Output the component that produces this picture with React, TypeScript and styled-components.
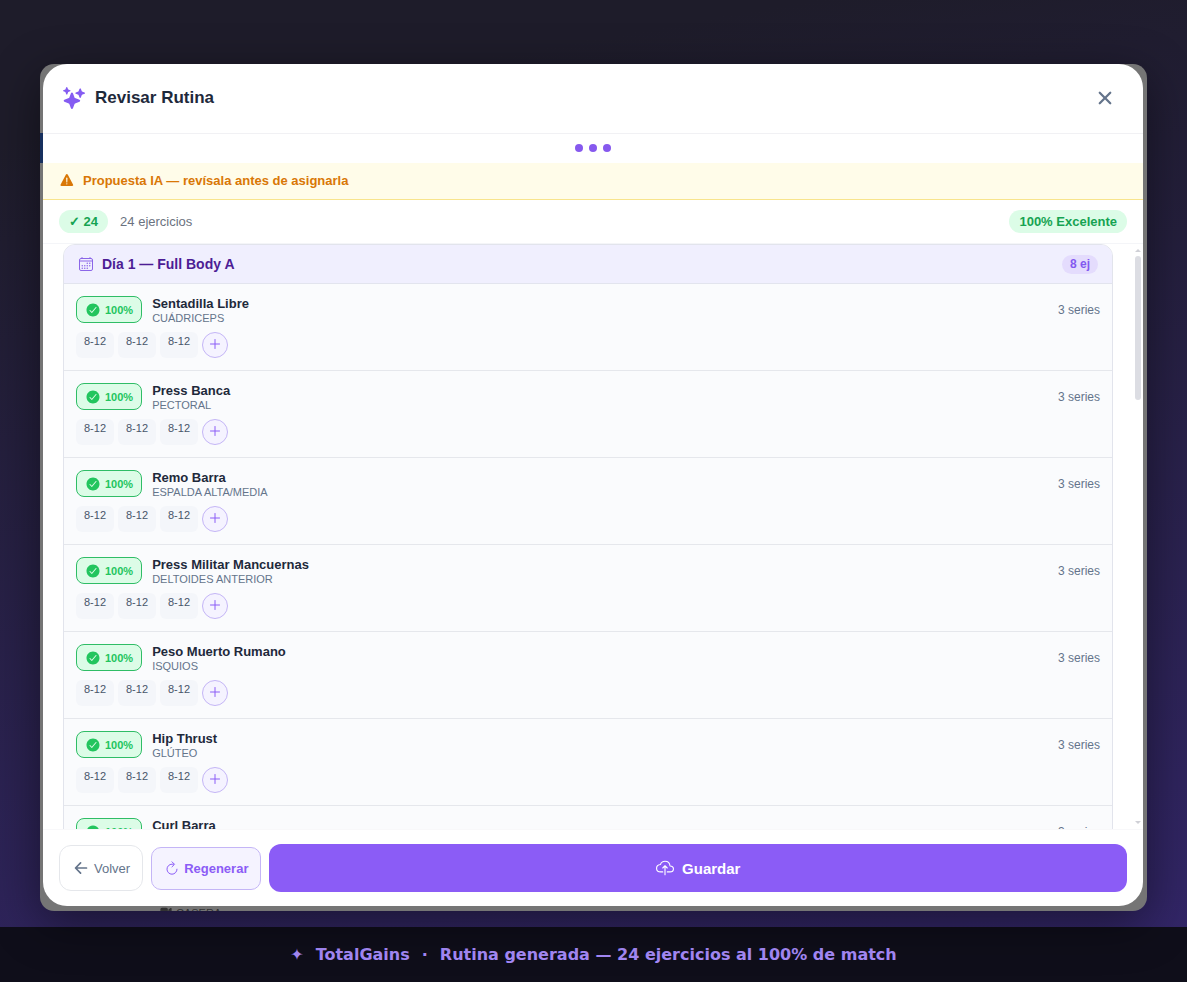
import React from 'react';
import styled, { createGlobalStyle } from 'styled-components';
import {
  IoAddOutline,
  IoArrowBack,
  IoCalendarOutline,
  IoCheckmarkCircle,
  IoClose,
  IoCloudUploadOutline,
  IoRefreshOutline,
  IoSparkles,
  IoVideocam,
  IoWarning,
} from 'react-icons/io5';

const GlobalStyle = createGlobalStyle`
  *, *::before, *::after { box-sizing: border-box; }
  body {
    margin: 0;
    font-family: "Liberation Sans", Arial, sans-serif;
    color: #1e293b;
  }
  button { font-family: inherit; cursor: pointer; }
  svg { display: block; flex: none; }
`;

const Page = styled.div`
  display: flex;
  flex-direction: column;
  height: 100vh;
  min-height: 480px;
  background: linear-gradient(170deg, #1e1c2a 0%, #1e1c2a 12%, #33266a 100%);
`;

const Stage = styled.main`
  flex: 1;
  min-height: 0;
  display: flex;
  padding: 64px 40px 16px;
`;

const Window = styled.div`
  position: relative;
  flex: 1;
  min-width: 0;
  display: flex;
  padding: 0 4px 5px 3px;
  border-radius: 14px;
  overflow: hidden;
  background: #757575;
  box-shadow: 0 12px 48px rgba(0, 0, 0, 0.45);
`;

const Underlay = styled.div`
  position: absolute;
  inset: 0;
  display: flex;
  flex-direction: column;
  justify-content: space-between;
  padding-top: 69px;
`;

const UnderlayBar = styled.div`
  width: 50%;
  height: 30px;
  background: #17305e;
`;

const UnderlayLabel = styled.div`
  display: flex;
  gap: 4px;
  height: 6px;
  padding-left: 120px;
  font-size: 11px;
  line-height: 16px;
  color: #333;
`;

const Modal = styled.section`
  position: relative;
  flex: 1;
  min-width: 0;
  display: flex;
  flex-direction: column;
  border-radius: 24px;
  overflow: hidden;
  background: #fff;
`;

const Header = styled.header`
  display: flex;
  align-items: center;
  justify-content: space-between;
  height: 70px;
  padding: 0 26px 2px 20px;
  border-bottom: 1px solid #f1f1f4;
`;

const Title = styled.h1`
  display: flex;
  align-items: center;
  gap: 10px;
  margin: 0;
  font-size: 17px;
  line-height: 24px;
  svg { color: #855cf2; }
`;

const CloseButton = styled.button`
  display: flex;
  padding: 0;
  border: 0;
  background: none;
  color: #64748b;
`;

const Steps = styled.div`
  display: flex;
  align-items: center;
  justify-content: center;
  gap: 6px;
  height: 29px;
  padding-bottom: 2px;
`;

const Dot = styled.span`
  width: 8px;
  height: 8px;
  border-radius: 50%;
  background: #8659ee;
`;

const Notice = styled.div`
  display: flex;
  align-items: center;
  gap: 8px;
  height: 37px;
  padding: 0 16px 2px;
  border-bottom: 1px solid #f8e48c;
  background: #fffce9;
  color: #d97706;
  font-size: 13px;
  font-weight: 700;
`;

const Summary = styled.div`
  display: flex;
  align-items: center;
  gap: 12px;
  height: 44px;
  padding: 0 16px;
  border-bottom: 1px solid #f4f5f8;
  font-size: 13px;
  color: #6b7280;
`;

const Pill = styled.span<{ $end?: boolean }>`
  padding: 4px 10px;
  margin-left: ${(p) => (p.$end ? 'auto' : '0')};
  border-radius: 12px;
  background: #dcfce7;
  color: #16a352;
  font-weight: 700;
  line-height: 15px;
`;

const Body = styled.div`
  flex: 1;
  min-height: 0;
  display: flex;
`;

const Scroller = styled.div`
  flex: 1;
  min-width: 0;
  padding: 0 19px 0 20px;
  overflow-y: auto;
  scrollbar-width: none;
`;

const Track = styled.div`
  display: flex;
  flex-direction: column;
  align-items: center;
  width: 11px;
  padding: 4px 0;
`;

const Thumb = styled.div`
  width: 6px;
  height: 25%;
  margin: 4px 0 auto;
  border-radius: 3px;
  background: #dcdde3;
`;

const Day = styled.section`
  border: 1px solid #e2e4ec;
  border-radius: 12px;
  overflow: hidden;
  background: #fafbfd;
`;

const DayHeader = styled.header`
  display: flex;
  align-items: center;
  gap: 8px;
  height: 39px;
  padding: 0 14px;
  border-bottom: 1px solid #e2e4ee;
  background: #f0effe;
  svg { color: #8b66e8; }
`;

const DayTitle = styled.h2`
  flex: 1;
  margin: 0;
  font-size: 14px;
  line-height: 20px;
  color: #4c1d95;
`;

const Count = styled.span`
  padding: 2px 8px;
  border-radius: 10px;
  background: #e4dcfd;
  color: #8359f0;
  font-size: 12px;
  font-weight: 700;
  line-height: 15px;
`;

const Exercise = styled.article`
  height: 87px;
  padding: 12px;
  border-bottom: 1px solid #e5e7ec;
`;

const ExerciseTop = styled.div`
  display: flex;
  align-items: center;
  gap: 10px;
  height: 27px;
`;

const Match = styled.span`
  display: flex;
  align-items: center;
  gap: 4px;
  height: 27px;
  padding: 0 8px;
  border: 1px solid #2fbd66;
  border-radius: 8px;
  background: #dcfce7;
  color: #22c55e;
  font-size: 11px;
  font-weight: 700;
`;

const Info = styled.div`
  flex: 1;
  min-width: 0;
  padding-top: 2px;
`;

const Name = styled.h3`
  margin: 0;
  font-size: 13px;
  line-height: 15px;
`;

const Muscle = styled.p`
  margin: 0;
  font-size: 11px;
  line-height: 14px;
  color: #64748b;
`;

const Series = styled.span`
  font-size: 12px;
  color: #64748b;
`;

const Sets = styled.div`
  display: flex;
  gap: 4px;
  margin-top: 9px;
`;

const Reps = styled.span`
  width: 38px;
  height: 26px;
  padding-top: 2px;
  border-radius: 6px;
  background: #f4f6fa;
  color: #475569;
  font-size: 11px;
  line-height: 14px;
  text-align: center;
`;

const AddButton = styled.button`
  display: flex;
  justify-content: center;
  width: 26px;
  height: 26px;
  padding: 3px 0 0;
  border: 1px solid #c4b5f6;
  border-radius: 50%;
  background: #f5f3ff;
  color: #8b5cf6;
`;

const Actions = styled.footer`
  display: flex;
  align-items: center;
  gap: 8px;
  padding: 14px 16px;
  border-top: 1px solid #f8f8fa;
`;

const Action = styled.button<{ $kind: 'back' | 'again' | 'save' }>`
  display: flex;
  align-items: center;
  justify-content: center;
  flex: ${(p) => (p.$kind === 'save' ? '1' : 'none')};
  gap: ${(p) => (p.$kind === 'save' ? '8px' : '4px')};
  height: ${(p) => ({ back: '46px', again: '43px', save: '48px' })[p.$kind]};
  padding: 0 12px;
  border: ${(p) =>
    ({ back: '1px solid #e5e7eb', again: '1px solid #c4b5f6', save: '0' })[p.$kind]};
  border-radius: ${(p) => (p.$kind === 'again' ? '10px' : '12px')};
  background: ${(p) => ({ back: '#fff', again: '#f5f3ff', save: '#8b5cf6' })[p.$kind]};
  color: ${(p) => ({ back: '#64748b', again: '#8b5cf6', save: '#fff' })[p.$kind]};
  font-size: ${(p) => (p.$kind === 'save' ? '15px' : '13px')};
  font-weight: ${(p) => (p.$kind === 'back' ? '400' : '700')};
`;

const Caption = styled.footer`
  display: flex;
  align-items: center;
  justify-content: center;
  gap: 12px;
  height: 55px;
  background: #0f0e1a;
  color: #a78bfa;
  font-family: "DejaVu Sans", sans-serif;
  font-size: 16px;
  font-weight: 700;
`;

const exercises = [
  ['Sentadilla Libre', 'CUÁDRICEPS'],
  ['Press Banca', 'PECTORAL'],
  ['Remo Barra', 'ESPALDA ALTA/MEDIA'],
  ['Press Militar Mancuernas', 'DELTOIDES ANTERIOR'],
  ['Peso Muerto Rumano', 'ISQUIOS'],
  ['Hip Thrust', 'GLÚTEO'],
  ['Curl Barra', 'BÍCEPS'],
];

const Arrow = ({ down = false }: { down?: boolean }) => (
  <svg width="6" height="4" viewBox="0 0 6 4" fill="#cfd0d6" aria-hidden="true">
    <path d={down ? 'M0 0h6L3 3z' : 'M0 4h6L3 1z'} />
  </svg>
);

export default function App() {
  return (
    <>
      <GlobalStyle />
      <Page>
        <Stage>
          <Window>
            <Underlay aria-hidden="true">
              <UnderlayBar />
              <UnderlayLabel>
                <IoVideocam size={12} />
                CASERA
              </UnderlayLabel>
            </Underlay>
            <Modal role="dialog" aria-labelledby="dialog-title">
              <Header>
                <Title id="dialog-title">
                  <IoSparkles size={22} />
                  Revisar Rutina
                </Title>
                <CloseButton aria-label="Cerrar">
                  <IoClose size={24} />
                </CloseButton>
              </Header>
              <Steps>
                <Dot />
                <Dot />
                <Dot />
              </Steps>
              <Notice>
                <IoWarning size={16} />
                Propuesta IA — revísala antes de asignarla
              </Notice>
              <Summary>
                <Pill>✓ 24</Pill>
                <span>24 ejercicios</span>
                <Pill $end>100% Excelente</Pill>
              </Summary>
              <Body>
                <Scroller>
                  <Day>
                    <DayHeader>
                      <IoCalendarOutline size={16} />
                      <DayTitle>Día 1 — Full Body A</DayTitle>
                      <Count>8 ej</Count>
                    </DayHeader>
                    {exercises.map(([name, muscle]) => (
                      <Exercise key={name}>
                        <ExerciseTop>
                          <Match>
                            <IoCheckmarkCircle size={16} />
                            100%
                          </Match>
                          <Info>
                            <Name>{name}</Name>
                            <Muscle>{muscle}</Muscle>
                          </Info>
                          <Series>3 series</Series>
                        </ExerciseTop>
                        <Sets>
                          <Reps>8-12</Reps>
                          <Reps>8-12</Reps>
                          <Reps>8-12</Reps>
                          <AddButton aria-label="Añadir serie">
                            <IoAddOutline size={16} />
                          </AddButton>
                        </Sets>
                      </Exercise>
                    ))}
                  </Day>
                </Scroller>
                <Track aria-hidden="true">
                  <Arrow />
                  <Thumb />
                  <Arrow down />
                </Track>
              </Body>
              <Actions>
                <Action $kind="back">
                  <IoArrowBack size={18} />
                  Volver
                </Action>
                <Action $kind="again">
                  <IoRefreshOutline size={16} />
                  Regenerar
                </Action>
                <Action $kind="save">
                  <IoCloudUploadOutline size={18} />
                  Guardar
                </Action>
              </Actions>
            </Modal>
          </Window>
        </Stage>
        <Caption>
          <span>✦</span>
          <span>TotalGains</span>
          <span>·</span>
          <span>Rutina generada — 24 ejercicios al 100% de match</span>
        </Caption>
      </Page>
    </>
  );
}
